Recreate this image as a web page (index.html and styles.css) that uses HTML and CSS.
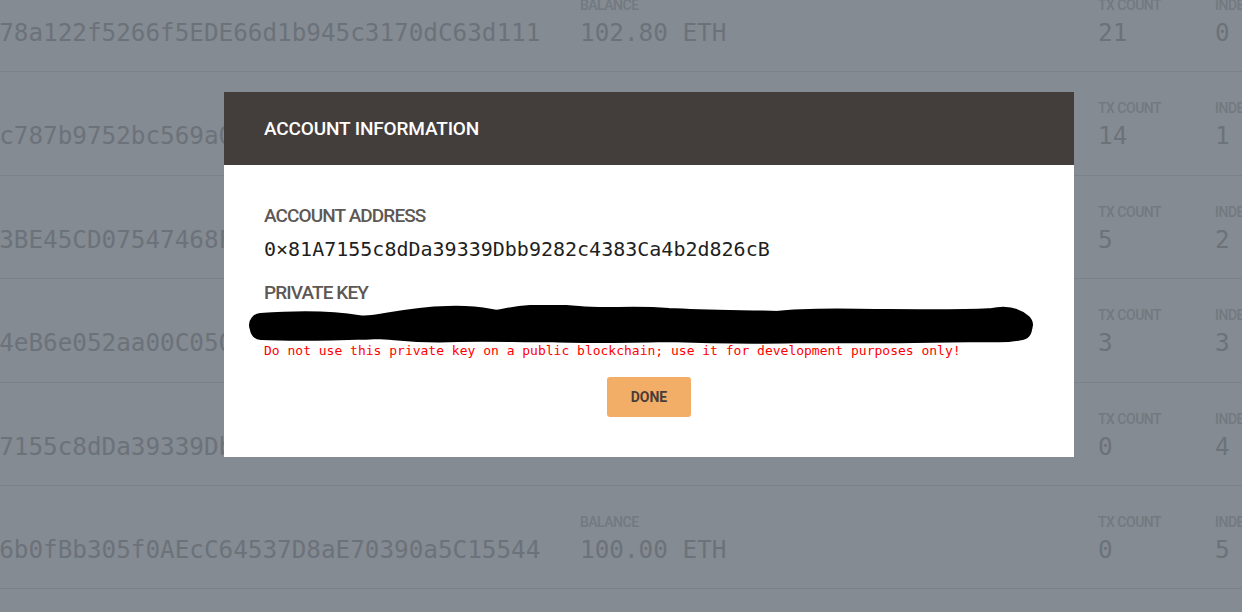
FILE: index.html
```html
<!DOCTYPE html>
<html>
<head>
<meta charset="utf-8">
<link rel="stylesheet" href="styles.css">
</head>
<body>
<div class="accounts">
  <div class="row">
    <div class="col addr"><div class="label">ADDRESS</div><div class="value">0x5A978a122f5266f5EDE66d1b945c3170dC63d111</div></div>
    <div class="col bal"><div class="label">BALANCE</div><div class="value">102.80 ETH</div></div>
    <div class="col tx"><div class="label">TX COUNT</div><div class="value">21</div></div>
    <div class="col idx"><div class="label">INDEX</div><div class="value">0</div></div>
  </div>
  <div class="row">
    <div class="col addr"><div class="label">ADDRESS</div><div class="value">0x3B2c787b9752bc569a0A1f3E2d8C4b6a9E1f0D27</div></div>
    <div class="col bal"><div class="label">BALANCE</div><div class="value">99.94 ETH</div></div>
    <div class="col tx"><div class="label">TX COUNT</div><div class="value">14</div></div>
    <div class="col idx"><div class="label">INDEX</div><div class="value">1</div></div>
  </div>
  <div class="row">
    <div class="col addr"><div class="label">ADDRESS</div><div class="value">0xF2e3BE45CD07547468Fa2b91C03dE7a5f66B0c1E</div></div>
    <div class="col bal"><div class="label">BALANCE</div><div class="value">99.98 ETH</div></div>
    <div class="col tx"><div class="label">TX COUNT</div><div class="value">5</div></div>
    <div class="col idx"><div class="label">INDEX</div><div class="value">2</div></div>
  </div>
  <div class="row">
    <div class="col addr"><div class="label">ADDRESS</div><div class="value">0x90C4eB6e052aa00C0509d7E3b1A2F84c6e5D9b13</div></div>
    <div class="col bal"><div class="label">BALANCE</div><div class="value">99.99 ETH</div></div>
    <div class="col tx"><div class="label">TX COUNT</div><div class="value">3</div></div>
    <div class="col idx"><div class="label">INDEX</div><div class="value">3</div></div>
  </div>
  <div class="row">
    <div class="col addr"><div class="label">ADDRESS</div><div class="value">0x81A7155c8dDa39339Dbb9282c4383Ca4b2d826cB</div></div>
    <div class="col bal"><div class="label">BALANCE</div><div class="value">100.00 ETH</div></div>
    <div class="col tx"><div class="label">TX COUNT</div><div class="value">0</div></div>
    <div class="col idx"><div class="label">INDEX</div><div class="value">4</div></div>
  </div>
  <div class="row">
    <div class="col addr"><div class="label">ADDRESS</div><div class="value">0xC1D6b0fBb305f0AEcC64537D8aE70390a5C15544</div></div>
    <div class="col bal"><div class="label">BALANCE</div><div class="value">100.00 ETH</div></div>
    <div class="col tx"><div class="label">TX COUNT</div><div class="value">0</div></div>
    <div class="col idx"><div class="label">INDEX</div><div class="value">5</div></div>
  </div>
  <div class="row">
    <div class="col addr"><div class="label">ADDRESS</div><div class="value">0x0d1e2f3a4b5c6d7e8f9a0b1c2d3e4f5a6b7c8d9e</div></div>
    <div class="col bal"><div class="label">BALANCE</div><div class="value">100.00 ETH</div></div>
    <div class="col tx"><div class="label">TX COUNT</div><div class="value">0</div></div>
    <div class="col idx"><div class="label">INDEX</div><div class="value">6</div></div>
  </div>
</div>

<div class="modal">
  <div class="modal-head">ACCOUNT INFORMATION</div>
  <div class="modal-body">
    <div class="field-label">ACCOUNT ADDRESS</div>
    <div class="field-value">0×81A7155c8dDa39339Dbb9282c4383Ca4b2d826cB</div>
    <div class="field-label pk">PRIVATE KEY</div>
    <div class="redact">
      <svg width="800" height="40" viewBox="0 0 800 40">
        <path d="M13 20 C40 18 80 17 110 22 C130 25 150 14 200 13 C230 12 240 16 250 17 C270 12 300 10 330 13 C360 16 380 12 420 15 C460 17 500 17 530 18 C560 14 600 16 640 16 C680 16 720 17 745 15 C758 12 766 14 773 20" fill="none" stroke="#000" stroke-width="24" stroke-linecap="round" stroke-linejoin="round"/>
        <path d="M13 24 C60 26 100 24 130 23 C150 24 170 28 210 26 C250 25 280 27 300 26 C340 28 380 27 420 26 C470 28 520 28 560 27 C620 28 680 27 740 26 C755 27 765 26 773 24" fill="none" stroke="#000" stroke-width="22" stroke-linecap="round" stroke-linejoin="round"/>
      </svg>
    </div>
    <div class="warn">Do not use this private key on a public blockchain; use it for development purposes only!</div>
    <div class="actions"><button class="done">DONE</button></div>
  </div>
</div>
</body>
</html>
```
FILE: styles.css
```css
html, body {
  margin: 0;
  padding: 0;
  height: 100%;
  overflow: hidden;
  background: #858b92;
}
.accounts {
  margin-top: -31px;
  margin-left: -74px;
}
.row {
  display: flex;
  height: 103.4px;
  box-sizing: border-box;
  border-bottom: 1px solid #7b8188;
  padding-top: 28px;
}
.col { flex: none; }
.addr { width: 654px; }
.bal { width: 518px; }
.tx { width: 117px; }
.idx { width: 100px; }
.label {
  font-family: "Roboto", "Liberation Sans", sans-serif;
  font-weight: 500;
  font-size: 14px;
  line-height: 16px;
  letter-spacing: -0.5px;
  color: #737980;
}
.value {
  margin-top: 6px;
  font-family: "DejaVu Sans Mono", "Liberation Mono", monospace;
  font-size: 24.3px;
  line-height: 28px;
  color: #6c727a;
  white-space: nowrap;
}
.modal {
  position: absolute;
  left: 224px;
  top: 92px;
  width: 850px;
  height: 365px;
  background: #fff;
}
.modal-head {
  height: 73px;
  box-sizing: border-box;
  background: #433e3b;
  color: #fff;
  font-family: "Roboto", "Open Sans", sans-serif;
  font-weight: 500;
  font-size: 19px;
  line-height: 73px;
  letter-spacing: -0.15px;
  padding-left: 40px;
}
.modal-body {
  padding: 40px 40px 0 40px;
}
.field-label {
  font-family: "Roboto", "Liberation Sans", sans-serif;
  font-weight: 500;
  font-size: 19px;
  line-height: 22px;
  letter-spacing: -0.9px;
  color: #5d5855;
}
.field-value {
  margin-top: 10px;
  font-family: "DejaVu Sans Mono", "Liberation Mono", monospace;
  font-size: 20px;
  line-height: 24px;
  color: #1f1f1f;
}
.pk { margin-top: 21px; }
.redact {
  margin-left: -16px;
  height: 40px;
  margin-top: 1px;
}
.redact svg { display: block; }
.warn {
  margin-top: -2px;
  font-family: "DejaVu Sans Mono", "Liberation Mono", monospace;
  font-size: 13px;
  line-height: 16px;
  color: #ff0000;
}
.actions {
  display: flex;
  justify-content: center;
  margin-top: 18px;
}
.done {
  width: 84px;
  height: 40px;
  border: none;
  border-radius: 3px;
  background: #f2ae66;
  color: #4a3c3a;
  font-family: "Roboto", "Liberation Sans", sans-serif;
  font-weight: 700;
  font-size: 14px;
  padding: 0;
}
```
